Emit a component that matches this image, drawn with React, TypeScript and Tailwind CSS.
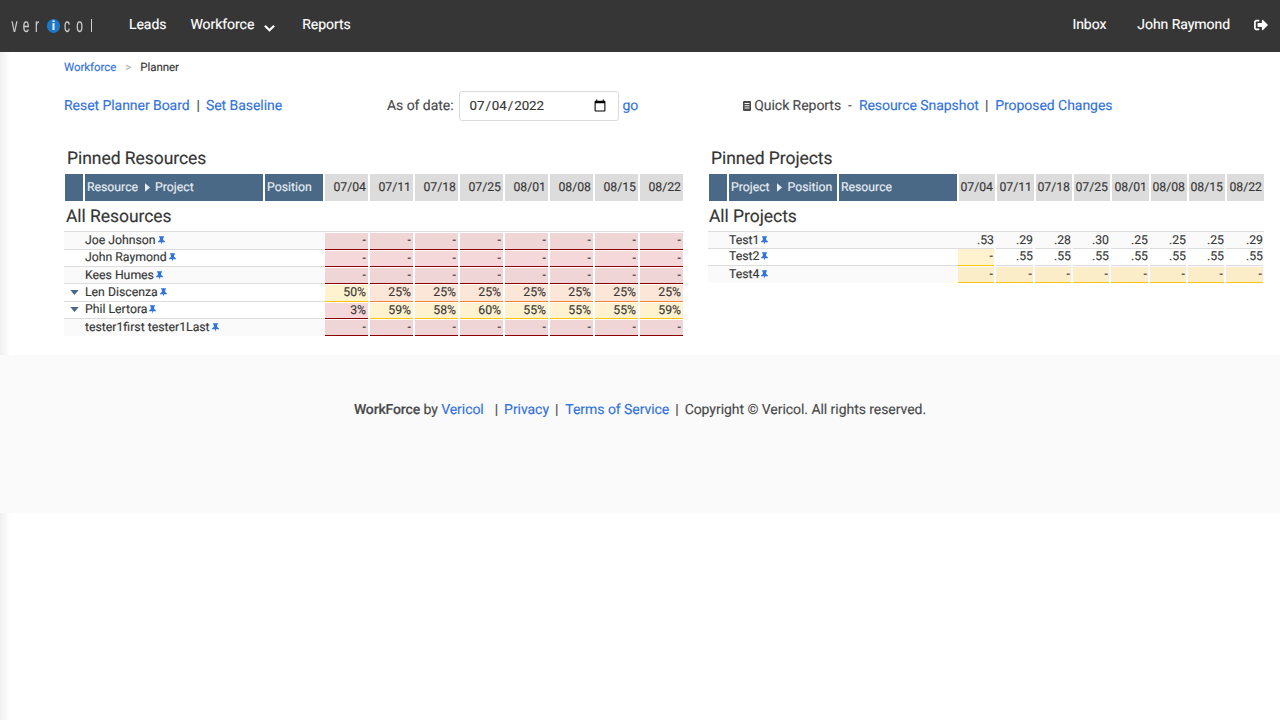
import { FaSignOutAlt } from "react-icons/fa";

const dates = ["07/04", "07/11", "07/18", "07/25", "08/01", "08/08", "08/15", "08/22"];

type Tone = "red" | "yellow" | "orange";

const tones: Record<Tone, string> = {
  red: "bg-[#f5d8da] border-[#8b0000]",
  yellow: "bg-[#fef2cf] border-[#fcc30f]",
  orange: "bg-[#fce6d8] border-[#f58233]",
};

const stripedTones: Record<Tone, string> = {
  red: "bg-[#f0d5d6] border-[#8b0000]",
  yellow: "bg-[#fcedc9] border-[#fcc30f]",
  orange: "bg-[#fce6d8] border-[#f58233]",
};

const dash = (tone: Tone) => Array.from({ length: 8 }, () => ({ v: "-", tone }));

const resources = [
  { name: "Joe Johnson", striped: true, tall: true, cells: dash("red") },
  { name: "John Raymond", nudge: true, cells: dash("red") },
  { name: "Kees Humes", striped: true, cells: dash("red") },
  {
    name: "Len Discenza",
    open: true,
    tall: true,
    cells: [
      { v: "50%", tone: "yellow" as Tone },
      ...["25%", "25%", "25%", "25%", "25%", "25%", "25%"].map((v) => ({ v, tone: "orange" as Tone })),
    ],
  },
  {
    name: "Phil Lertora",
    open: true,
    nudge: true,
    cells: [
      { v: "3%", tone: "red" as Tone },
      ...["59%", "58%", "60%", "55%", "55%", "55%", "59%"].map((v) => ({ v, tone: "yellow" as Tone })),
    ],
  },
  { name: "tester1first tester1Last", striped: true, cells: dash("red") },
];

const wideColumns = [1, 4, 7];

const projects = [
  { name: "Test1", striped: true, cells: [".53", ".29", ".28", ".30", ".25", ".25", ".25", ".29"].map((v) => ({ v, tone: null })) },
  {
    name: "Test2",
    nudge: true,
    cells: [
      { v: "-", tone: "yellow" as Tone },
      ...Array.from({ length: 7 }, () => ({ v: ".55", tone: null })),
    ],
  },
  { name: "Test4", striped: true, cells: dash("yellow") },
];

function Pin() {
  return (
    <svg viewBox="0 0 10 12" className="w-[7px] h-[9px] fill-[#3273dc] shrink-0">
      <path d="M1.5 0h7v1.4L7.4 2.2v3.2L10 7.4v1.1H5.8L5 12l-.8-3.5H0V7.4l2.6-2V2.2L1.5 1.4z" />
    </svg>
  );
}

function Caret() {
  return (
    <svg viewBox="0 0 10 6" className="w-[9px] h-[5px] fill-[#4a6987]">
      <path d="M0 0h10L5 6z" />
    </svg>
  );
}

function HeaderCaret() {
  return (
    <svg viewBox="0 0 6 10" className="w-[5px] h-[9px] fill-[#e8edf2]">
      <path d="M0 0l6 5-6 5z" />
    </svg>
  );
}

function Logo() {
  return (
    <div className="flex items-center h-[20px] text-[#d0d0d0] blur-[0.6px] font-['Liberation_Sans',sans-serif] text-[20px] leading-[20px]">
      <span className="w-[11px] text-center scale-x-[0.6]">v</span>
      <span className="w-[12px] text-center scale-x-[0.6]">e</span>
      <span className="w-[10px] text-center scale-x-[0.6]">r</span>
      <span className="ml-[5px] w-[13px] h-[14px] rounded-full bg-[#1d78c8] text-[#dcecf8] text-[13px] leading-[14px] text-center font-bold">
        i
      </span>
      <span className="w-[14px] text-center scale-x-[0.6]">c</span>
      <span className="w-[11px] text-center scale-x-[0.6]">o</span>
      <span className="ml-[6px] w-px h-[13px] bg-[#d0d0d0]" />
    </div>
  );
}

export default function App() {
  return (
    <div className="relative min-h-[720px] bg-white font-['Roboto',sans-serif] text-[14px] text-[#4a4a4a] tracking-[-0.05px] [text-rendering:geometricPrecision] [-webkit-text-stroke:0.15px]">
      <nav className="h-[52px] bg-[#363636] flex items-center pl-[9px] pr-[12px] pb-[1px] text-white">
        <Logo />
        <a className="ml-[37px]">Leads</a>
        <a className="ml-[24px] flex items-center">
          Workforce
          <svg viewBox="0 0 12 8" className="ml-[10px] mt-[4px] w-[11px] h-[8px] fill-none stroke-white stroke-[2.4]">
            <path d="M1 1.5l5 5 5-5" />
          </svg>
        </a>
        <a className="ml-[27px]">Reports</a>
        <a className="ml-auto">Inbox</a>
        <a className="ml-[31px]">John Raymond</a>
        <FaSignOutAlt className="ml-[24px] mb-[2px] w-[14px] h-[14px] text-white" />
      </nav>

      <div className="absolute left-0 top-[52px] bottom-0 w-[10px] bg-gradient-to-r from-[#efefef] to-white" />

      <main className="relative h-[303px] pl-[64px]">
        <div className="flex items-center h-[30px] pt-[1px] text-[11.5px] text-[#363636]">
          <a className="text-[#3273dc]">Workforce</a>
          <span className="ml-[9px] text-[#b5b5b5]">&gt;</span>
          <span className="ml-[9px]">Planner</span>
        </div>

        <div className="flex items-center h-[32px] mt-[8px]">
          <div className="w-[323px] flex">
            <a className="text-[#3273dc]">Reset Planner Board</a>
            <span className="ml-[7px] mr-[6px]">|</span>
            <a className="text-[#3273dc]">Set Baseline</a>
          </div>
          <span>As of date:</span>
          <input
            type="date"
            defaultValue="2022-07-04"
            className="ml-[5px] w-[160px] h-[30px] pl-[9px] pr-[9px] border border-[#dbdbdb] rounded-[3px] text-[13.33px] text-[#363636] bg-white"
          />
          <a className="ml-[4px] text-[#3273dc]">go</a>
          <div className="ml-[105px] flex items-center">
            <svg viewBox="0 0 8 10" className="w-[8px] h-[10px] mr-[3px] fill-[#4a4a4a]">
              <path d="M1 0h6a1 1 0 011 1v8a1 1 0 01-1 1H1a1 1 0 01-1-1V1a1 1 0 011-1zm.6 2v1h4.8V2zm0 2.2v1h4.8v-1zm0 2.2v1h4.8v-1z" fillRule="evenodd" />
            </svg>
            <span>Quick Reports</span>
            <span className="ml-[7px] mr-[7px]">-</span>
            <a className="text-[#3273dc]">Resource Snapshot</a>
            <span className="ml-[6px] mr-[7px]">|</span>
            <a className="text-[#3273dc]">Proposed Changes</a>
          </div>
        </div>

        <div className="flex mt-[22px]">
          <section className="w-[620px]">
            <h2 className="pl-[3px] h-[30px] text-[17.5px] leading-[30px] text-[#363636]">Pinned Resources</h2>
            <div className="flex gap-[2px] pl-[1px] h-[27px] text-[12.25px] text-[#363636] tracking-normal">
              <div className="w-[18px] bg-[#4a6987]" />
              <div className="w-[178px] bg-[#4a6987] text-[#e8edf2] flex items-center pl-[2px]">
                Resource
                <span className="ml-[7px] mr-[5px]">
                  <HeaderCaret />
                </span>
                Project
              </div>
              <div className="w-[58px] bg-[#4a6987] text-[#e8edf2] flex items-center pl-[2px]">Position</div>
              {dates.map((d) => (
                <div key={d} className="w-[43px] bg-[#dcdcdc] flex items-center justify-end pr-[2px]">
                  {d}
                </div>
              ))}
            </div>
            <h2 className="mt-[1px] h-[29px] pt-[2px] pl-[2px] text-[17.5px] leading-[27px] text-[#363636]">All Resources</h2>
            <div className="border-t border-[#dcdcdc] text-[12.25px] leading-[15px] text-[#363636] tracking-normal">
              {resources.map((r, i) => (
                <div key={r.name} className={`flex w-[620px] ${r.tall ? "h-[18px]" : "h-[17px]"}`}>
                  <div
                    className={`w-[261px] flex items-center shrink-0 ${r.striped ? "bg-[#fafafa]" : "bg-white"} ${
                      i < resources.length - 1 ? "border-b border-[#dcdcdc]" : ""
                    } ${r.nudge ? "pb-[1px]" : ""}`}
                  >
                    <span className="w-[21px] flex justify-center">{r.open && <Caret />}</span>
                    <span>{r.name}</span>
                    <span className="ml-[2px]">
                      <Pin />
                    </span>
                  </div>
                  <div className="flex gap-[2px] flex-1 pt-[1px]">
                    {r.cells.map((c, j) => (
                      <div
                        key={j}
                        className={`w-[43px] border-b text-right pr-[2px] ${r.striped ? stripedTones[c.tone] : tones[c.tone]}`}
                      >
                        {c.v}
                      </div>
                    ))}
                  </div>
                </div>
              ))}
            </div>
          </section>

          <section className="ml-[24px] w-[556px]">
            <h2 className="pl-[3px] h-[30px] text-[17.5px] leading-[30px] text-[#363636]">Pinned Projects</h2>
            <div className="flex gap-[2px] pl-[1px] h-[27px] text-[12.25px] text-[#363636] tracking-normal">
              <div className="w-[18px] bg-[#4a6987]" />
              <div className="w-[108px] bg-[#4a6987] text-[#e8edf2] flex items-center pl-[2px]">
                Project
                <span className="ml-[7px] mr-[6px]">
                  <HeaderCaret />
                </span>
                Position
              </div>
              <div className="w-[118px] bg-[#4a6987] text-[#e8edf2] flex items-center pl-[2px]">Resource</div>
              {dates.map((d, i) => (
                <div
                  key={d}
                  className={`bg-[#dcdcdc] flex items-center justify-end pr-[2px] ${wideColumns.includes(i) ? "w-[37px]" : "w-[36px]"}`}
                >
                  {d}
                </div>
              ))}
            </div>
            <h2 className="mt-[1px] h-[29px] pt-[2px] pl-[1px] text-[17.5px] leading-[27px] text-[#363636]">All Projects</h2>
            <div className="border-t border-[#dcdcdc] text-[12.25px] leading-[15px] text-[#363636] tracking-normal">
              {projects.map((p, i) => (
                <div key={p.name} className={`flex h-[17px] ${p.striped ? "bg-[#fafafa]" : "bg-white"}`}>
                  <div
                    className={`w-[250px] flex items-center shrink-0 ${
                      i < projects.length - 1 ? "border-b border-[#dcdcdc]" : ""
                    } ${p.nudge ? "pb-[1px]" : ""}`}
                  >
                    <span className="w-[21px]" />
                    <span>{p.name}</span>
                    <span className="ml-[2px]">
                      <Pin />
                    </span>
                  </div>
                  <div className={`flex gap-[2px] flex-1 ${p.nudge ? "" : "pt-[1px]"}`}>
                    {p.cells.map((c, j) => (
                      <div
                        key={j}
                        className={`text-right ${c.tone ? "pr-[1px]" : ""} ${wideColumns.includes(j) ? "w-[37px]" : "w-[36px]"} ${
                          c.tone
                            ? `border-b ${p.striped ? stripedTones[c.tone as Tone] : tones[c.tone as Tone]}`
                            : i < projects.length - 1
                              ? "border-b border-[#dcdcdc]"
                              : ""
                        }`}
                      >
                        {c.v}
                      </div>
                    ))}
                  </div>
                </div>
              ))}
            </div>
          </section>
        </div>
      </main>

      <footer className="relative h-[158px] bg-[#fafafa] flex justify-center pt-[47px]">
        <p className="leading-[16px]">
          <b className="font-medium tracking-[-0.15px]">WorkForce</b> by <a className="text-[#3273dc]">Vericol</a>
          <span className="ml-[11px] mr-[6px]">|</span>
          <a className="text-[#3273dc]">Privacy</a>
          <span className="ml-[6px] mr-[7px]">|</span>
          <a className="text-[#3273dc]">Terms of Service</a>
          <span className="mx-[6px]">|</span>
          Copyright © Vericol. All rights reserved.
        </p>
      </footer>
    </div>
  );
}
